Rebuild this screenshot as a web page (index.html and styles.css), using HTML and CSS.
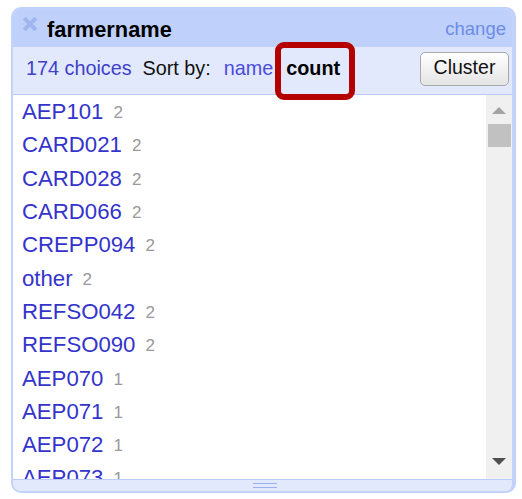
FILE: index.html
```html
<!DOCTYPE html>
<html>
<head>
<meta charset="utf-8">
<link rel="stylesheet" href="styles.css">
</head>
<body>
<div class="panel">
  <div class="header">
    <svg class="close" width="14" height="14" viewBox="0 0 14 14">
      <path d="M2.5 2.5 L11.5 11.5 M11.5 2.5 L2.5 11.5" stroke="#9fb6ef" stroke-width="4" stroke-linecap="square"/>
    </svg>
    <span class="title">farmername</span>
    <span class="change">change</span>
  </div>
  <div class="controls">
    <span class="choices">174 choices</span>
    <span class="sortby">Sort by:</span>
    <span class="sortname">name</span>
    <span class="sortcount">count</span>
    <button class="cluster">Cluster</button>
    <div class="highlight"></div>
  </div>
  <div class="body">
    <div class="list">
      <div class="row"><span class="name">AEP101</span><span class="count">2</span></div>
      <div class="row"><span class="name">CARD021</span><span class="count">2</span></div>
      <div class="row"><span class="name">CARD028</span><span class="count">2</span></div>
      <div class="row"><span class="name">CARD066</span><span class="count">2</span></div>
      <div class="row"><span class="name">CREPP094</span><span class="count">2</span></div>
      <div class="row"><span class="name">other</span><span class="count">2</span></div>
      <div class="row"><span class="name">REFSO042</span><span class="count">2</span></div>
      <div class="row"><span class="name">REFSO090</span><span class="count">2</span></div>
      <div class="row"><span class="name">AEP070</span><span class="count">1</span></div>
      <div class="row"><span class="name">AEP071</span><span class="count">1</span></div>
      <div class="row"><span class="name">AEP072</span><span class="count">1</span></div>
      <div class="row"><span class="name">AEP073</span><span class="count">1</span></div>
    </div>
    <div class="scrollbar">
      <div class="arrow up"></div>
      <div class="thumb"></div>
      <div class="spacer"></div>
      <div class="arrow down"></div>
    </div>
  </div>
  <div class="footer"><div class="grip"></div></div>
</div>
</body>
</html>
```
FILE: styles.css
```css
html, body {
  margin: 0;
  padding: 0;
  background: #ffffff;
}
body {
  font-family: "Liberation Sans", Arial, sans-serif;
  width: 522px;
  height: 499px;
  overflow: hidden;
}
.panel {
  margin: 7px 0 0 11px;
  width: 505px;
  height: 486px;
  box-sizing: border-box;
  border: 2px solid #c3d2fa;
  border-right-width: 4px;
  border-radius: 10px;
  background: #e2e9fd;
  display: flex;
  flex-direction: column;
  overflow: hidden;
}
.header {
  height: 38px;
  flex: none;
  background: #bfd0fb;
  display: flex;
  align-items: center;
  padding: 0 6px 0 10px;
  box-sizing: border-box;
}
.close {
  align-self: flex-start;
  margin-top: 8px;
  flex: none;
}
.title {
  font-weight: bold;
  font-size: 21.8px;
  color: #000;
  margin-left: 10px;
  margin-top: 4px;
}
.change {
  margin-left: auto;
  font-size: 18.5px;
  color: #6c8de6;
  margin-top: 1px;
}
.controls {
  position: relative;
  height: 48px;
  flex: none;
  box-sizing: border-box;
  border-bottom: 1px solid #b9caf6;
  background: #e2e9fd;
  display: flex;
  align-items: center;
  padding: 0 3px 4px 13px;
  font-size: 19.8px;
}
.choices {
  color: #4040c8;
}
.sortby {
  color: #111;
  margin-left: 11px;
}
.sortname {
  color: #4b4bdc;
  margin-left: 13px;
}
.sortcount {
  color: #000;
  font-weight: bold;
  margin-left: 13px;
}
.cluster {
  margin-left: auto;
  width: 89px;
  height: 34px;
  margin-top: 1px;
  font-family: "Liberation Sans", Arial, sans-serif;
  font-size: 19.5px;
  color: #111;
  border: 1px solid #a9a9a9;
  border-radius: 5px;
  background: linear-gradient(#ffffff, #e4e4e4);
  padding: 0 0 3px 0;
}
.highlight {
  position: absolute;
  left: 262px;
  top: -5px;
  width: 80px;
  height: 58px;
  box-sizing: border-box;
  border: 6px solid #b50000;
  border-radius: 9px;
}
.body {
  flex: none;
  height: 384px;
  display: flex;
  background: #fff;
}
.list {
  flex: 1;
  overflow: hidden;
  padding-left: 9px;
}
.row {
  height: 33.3px;
  box-sizing: border-box;
  display: flex;
  align-items: center;
  white-space: nowrap;
  padding-top: 1px;
}
.name {
  font-size: 22.2px;
  color: #3434cc;
}
.count {
  font-size: 17px;
  color: #999;
  margin-left: 10px;
  margin-top: 2px;
}
.scrollbar {
  flex: none;
  width: 26px;
  background: #f0f0f0;
  display: flex;
  flex-direction: column;
  align-items: center;
}
.arrow {
  width: 0;
  height: 0;
  border-left: 7px solid transparent;
  border-right: 7px solid transparent;
}
.arrow.up {
  border-bottom: 7px solid #a3a3a3;
  margin-top: 12px;
}
.thumb {
  width: 23px;
  height: 23px;
  background: #c1c1c1;
  margin-top: 10px;
}
.spacer {
  flex: 1;
}
.arrow.down {
  border-top: 7px solid #4f4f4f;
  margin-bottom: 14px;
}
.footer {
  flex: 1;
  background: #e2e9fd;
  border-top: 1px solid #bccbf7;
  display: flex;
  justify-content: center;
  align-items: center;
}
.grip {
  width: 24px;
  height: 3px;
  border-top: 1px solid #9cb1ee;
  border-bottom: 1px solid #9cb1ee;
  margin-left: 4px;
}
```
